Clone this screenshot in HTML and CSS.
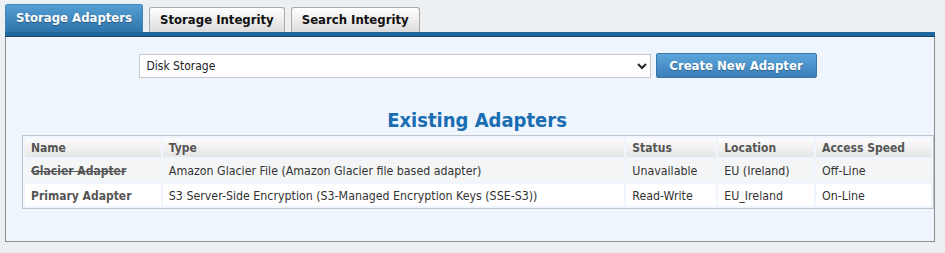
FILE: index.html
```html
<!DOCTYPE html>
<html lang="en">

<head>
    <meta charset="UTF-8">
    <meta name="viewport" content="width=device-width, initial-scale=1.0">
    <title>Storage Adapters</title>
    <link rel="stylesheet" href="styles.css">
</head>

<body>
    <div class="page-wrapper">
        <ul class="tabs">
            <li class="tab active">Storage Adapters</li>
            <li class="tab">Storage Integrity</li>
            <li class="tab">Search Integrity</li>
        </ul>
        <div class="tab-bar"></div>
        <div class="panel">
            <div class="create-row">
                <select class="adapter-select">
                    <option>Disk Storage</option>
                </select>
                <button class="create-button">Create New Adapter</button>
            </div>

            <h2 class="section-title">Existing Adapters</h2>

            <table class="adapters">
                <colgroup>
                    <col class="col-name">
                    <col class="col-type">
                    <col class="col-status">
                    <col class="col-location">
                    <col class="col-speed">
                </colgroup>
                <thead>
                    <tr>
                        <th>Name</th>
                        <th>Type</th>
                        <th>Status</th>
                        <th>Location</th>
                        <th>Access Speed</th>
                    </tr>
                </thead>
                <tbody>
                    <tr class="odd">
                        <td class="name disabled">Glacier Adapter</td>
                        <td>Amazon Glacier File (Amazon Glacier file based adapter)</td>
                        <td>Unavailable</td>
                        <td>EU (Ireland)</td>
                        <td>Off-Line</td>
                    </tr>
                    <tr>
                        <td class="name">Primary Adapter</td>
                        <td>S3 Server-Side Encryption (S3-Managed Encryption Keys (SSE-S3))</td>
                        <td>Read-Write</td>
                        <td>EU_Ireland</td>
                        <td>On-Line</td>
                    </tr>
                </tbody>
            </table>
        </div>
    </div>
</body>

</html>
```

FILE: styles.css
```css
body,
html {
    margin: 0;
    padding: 0;
    background-color: #edf0f2;
    font-family: 'DejaVu Sans Condensed', 'DejaVu Sans', sans-serif;
    font-size: 13px;
    color: #333;
}

.page-wrapper {
    padding: 4px 5px 0 5px;
}

/* tabs */

.tabs {
    display: flex;
    align-items: flex-end;
    gap: 6px;
    margin: 0;
    padding: 0;
    list-style: none;
}

.tab {
    height: 24px;
    padding: 0 10px;
    line-height: 24px;
    font-weight: bold;
    color: #111;
    background: linear-gradient(#ffffff, #dcdcdc);
    border: 1px solid #a9a9a9;
    border-bottom: none;
    border-radius: 3px 3px 0 0;
}

.tab.active {
    height: 27px;
    line-height: 26px;
    color: white;
    background: linear-gradient(#559fd4, #2d74ab);
    border-color: #3f86bd;
    text-shadow: 0 1px 1px rgba(0, 0, 0, 0.35);
}

.tab-bar {
    height: 4px;
    margin-right: 5px;
    background-color: #1f679c;
    border-bottom: 1px solid #15456a;
}

/* panel */

.panel {
    height: 205px;
    margin-right: 5px;
    background-color: #eef5fd;
    border: 1px solid #8c8c8c;
    border-top: none;
    box-sizing: border-box;
}

.create-row {
    display: flex;
    justify-content: center;
    align-items: center;
    gap: 5px;
    padding: 16px 0 0 15px;
}

.adapter-select {
    width: 512px;
    height: 24px;
    padding: 0 3px;
    font-family: inherit;
    font-size: 12px;
    color: #222;
    background-color: white;
    border: 1px solid #c8c8c8;
    border-radius: 0;
}

.create-button {
    height: 25px;
    width: 161px;
    padding: 0;
    font-family: inherit;
    font-size: 13px;
    font-weight: bold;
    color: white;
    background: linear-gradient(#5ca6da, #3a7fba);
    border: 1px solid #3a76a8;
    border-radius: 2px;
    text-shadow: 0 1px 1px rgba(0, 0, 0, 0.3);
}

.section-title {
    margin: 31px 0 3px 14px;
    text-align: center;
    font-size: 20px;
    line-height: 23px;
    color: #1a6db3;
}

/* adapters table */

.adapters {
    margin: 0 0 0 16px;
    table-layout: fixed;
    border: 1px solid #c4c4c4;
    border-spacing: 2px;
    background-color: #eef5fd;
}

.col-name {
    width: 136px;
}

.col-type {
    width: 462px;
}

.col-status {
    width: 90px;
}

.col-location {
    width: 96px;
}

.col-speed {
    width: 115px;
}

.adapters th,
.adapters td {
    padding: 1px 6px 0 6px;
    text-align: left;
    white-space: nowrap;
    overflow: hidden;
}

.adapters th {
    height: 18px;
    font-size: 12px;
    font-weight: bold;
    color: #555;
    background: linear-gradient(#fdfdfd, #e6e6e6);
}

.adapters td {
    height: 21px;
    font-size: 12.3px;
    background-color: white;
}

.adapters tr.odd td {
    height: 22px;
    background-color: #f4f5f6;
}

.adapters td.name {
    font-size: 12px;
    font-weight: bold;
    color: #555;
}

.adapters td.disabled {
    text-decoration: line-through;
}
```
